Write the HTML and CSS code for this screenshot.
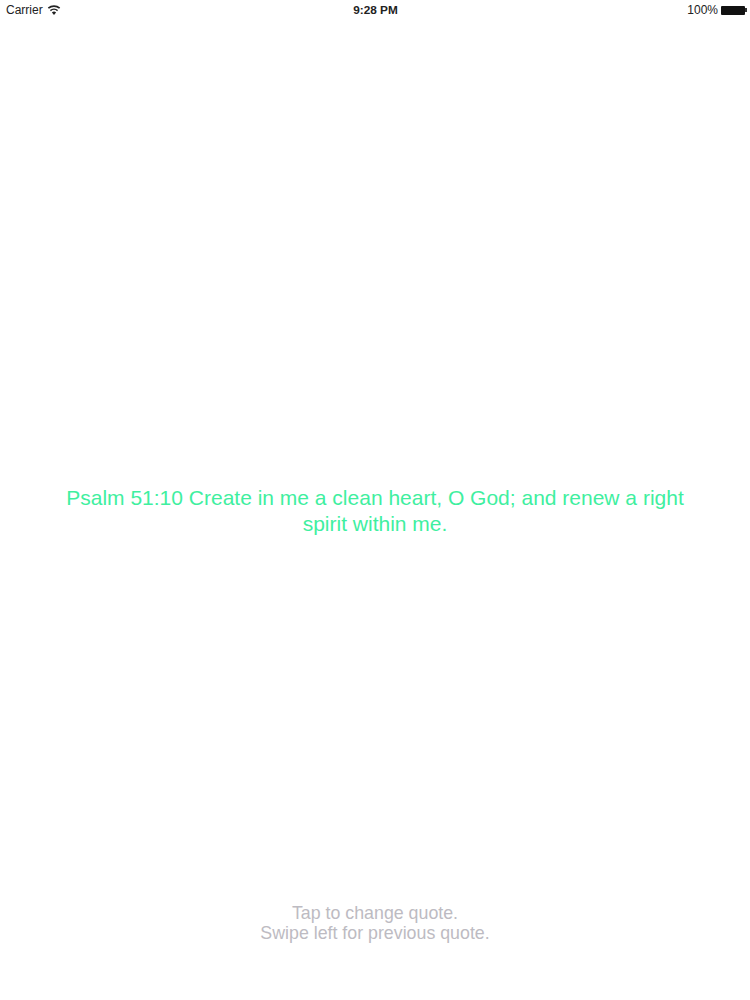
FILE: index.html
```html
<!DOCTYPE html>
<html lang="en">
<head>
<meta charset="utf-8">
<title>Quote</title>
<link rel="stylesheet" href="styles.css">
</head>
<body>
<div class="screen">
  <header class="status">
    <div class="status-left">
      <span>Carrier</span>
      <svg class="wifi" width="14" height="10" viewBox="0 0 14 10"><path d="M7 10 4.900 7.400a3.200 3.200 0 0 1 4.200 0ZM3.900 6.200 2.900 5a6.200 6.200 0 0 1 8.200 0l-1 1.200a4.700 4.700 0 0 0-6.200 0ZM1.900 3.800.8 2.500a9.500 9.500 0 0 1 12.400 0l-1.100 1.300a7.800 7.800 0 0 0-10.200 0Z" fill="#222"/></svg>
    </div>
    <div class="status-time">9:28 PM</div>
    <div class="status-right">
      <span>100%</span>
      <span class="battery"></span>
      <span class="battery-tip"></span>
    </div>
  </header>
  <main class="quote-area">
    <p class="quote">Psalm 51:10 Create in me a clean heart, O God; and renew a right spirit within me.</p>
  </main>
  <footer class="hint">Tap to change quote.<br>Swipe left for previous quote.</footer>
</div>
</body>
</html>
```
FILE: styles.css
```css
* { box-sizing: border-box; }
html, body { margin: 0; padding: 0; background: #fff; }
.screen {
  width: 750px;
  height: 1000px;
  display: flex;
  flex-direction: column;
  font-family: "Liberation Sans", Arial, sans-serif;
}
.status {
  height: 20px;
  padding: 0 3px 0 6px;
  display: grid;
  grid-template-columns: 1fr auto 1fr;
  align-items: center;
  font-size: 12px;
  color: #222;
}
.status-left { display: flex; align-items: center; gap: 4px; }
.status-time { font-weight: 700; font-size: 11.800px; margin-left: -2px; }
.status-right { display: flex; align-items: center; justify-content: flex-end; }
.battery {
  width: 24px;
  height: 9px;
  margin-left: 3px;
  background: #111;
  border-radius: 1px;
}
.battery-tip { width: 2px; height: 4px; background: #333; }
.quote-area {
  flex: 1;
  padding: 465px 50px 0;
}
.quote {
  margin: 0;
  font-size: 21px;
  line-height: 26px;
  text-align: center;
  color: #3fefa0;
}
.hint {
  height: 97px;
  font-size: 17.800px;
  line-height: 20px;
  text-align: center;
  color: #bdbbc2;
}
```
